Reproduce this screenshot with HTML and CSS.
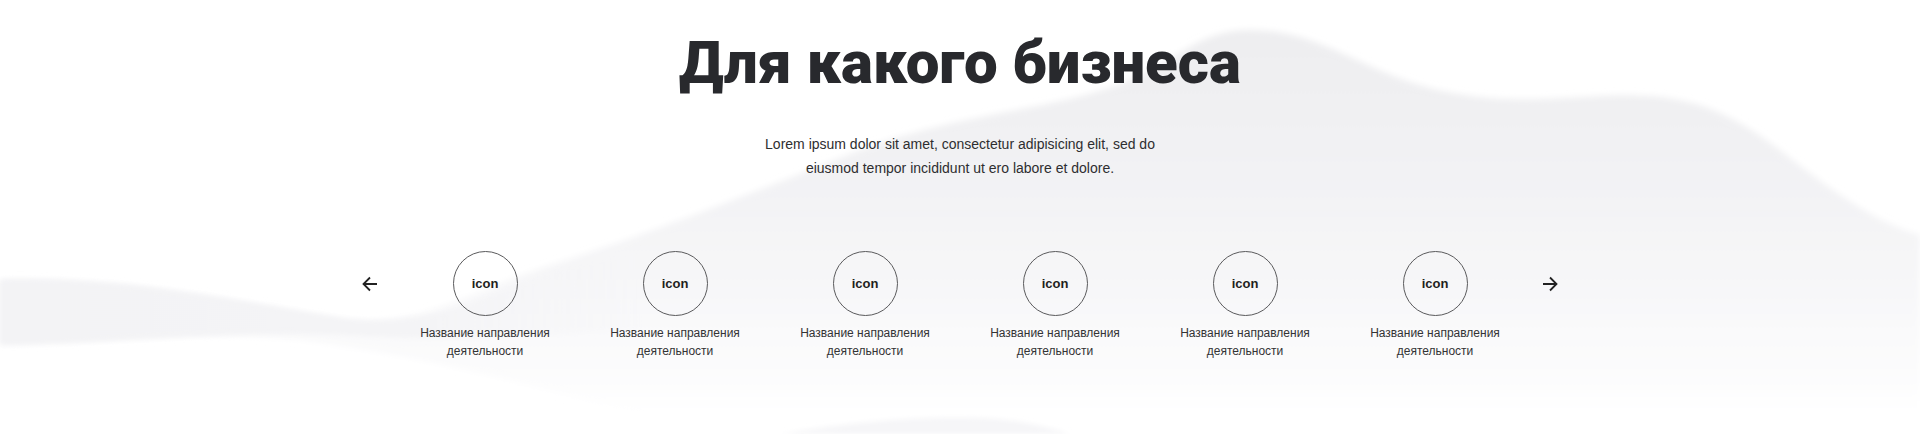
FILE: index.html
```html
<!DOCTYPE html>
<html lang="ru">
<head>
<meta charset="utf-8">
<title>Для какого бизнеса</title>
<link rel="stylesheet" href="styles.css">
</head>
<body>
<section class="business">
  <svg class="business__bg" viewBox="0 0 1920 434" preserveAspectRatio="none" aria-hidden="true">
    <defs>
      <linearGradient id="mountainFill" gradientUnits="userSpaceOnUse" x1="0" y1="30" x2="0" y2="420">
        <stop offset="0" stop-color="#eeeef0"/>
        <stop offset="0.45" stop-color="#f3f3f5"/>
        <stop offset="0.8" stop-color="#fafafb"/>
        <stop offset="1" stop-color="#ffffff"/>
      </linearGradient>
      <linearGradient id="ribbonFill" gradientUnits="userSpaceOnUse" x1="0" y1="0" x2="700" y2="0">
        <stop offset="0" stop-color="#f3f3f5"/>
        <stop offset="0.6" stop-color="#f4f4f6"/>
        <stop offset="1" stop-color="#f6f6f8" stop-opacity="0"/>
      </linearGradient>
      <filter id="soften" x="-5%" y="-10%" width="110%" height="120%">
        <feGaussianBlur stdDeviation="3"/>
      </filter>
      <filter id="softenLight" x="-5%" y="-20%" width="110%" height="140%">
        <feGaussianBlur stdDeviation="2.5"/>
      </filter>
    </defs>
    <path filter="url(#soften)" fill="url(#mountainFill)" d="M0,280 C120,276 230,300 340,318 C420,330 470,290 560,262 C650,234 760,190 860,150 C960,112 1060,110 1130,80 C1180,58 1200,30 1250,30 C1320,30 1360,70 1430,88 C1490,103 1530,100 1600,96 C1680,92 1720,105 1780,150 C1830,190 1880,225 1920,235 L1920,460 L760,460 C600,400 450,360 300,340 C200,330 100,345 0,345 Z"/>
    <path filter="url(#softenLight)" fill="url(#ribbonFill)" d="M0,280 C120,276 230,300 340,318 C420,330 480,300 560,268 L640,250 L640,330 C560,335 460,342 360,336 C240,328 110,344 0,345 Z"/>
    <path filter="url(#softenLight)" fill="#f6f6f8" d="M780,434 C840,424 900,416 980,418 C1020,419 1050,428 1070,434 Z"/>
  </svg>

  <div class="business__inner">
    <h2 class="business__title">Для какого бизнеса</h2>
    <p class="business__text">Lorem ipsum dolor sit amet, consectetur adipisicing elit, sed do eiusmod tempor incididunt ut ero labore et dolore.</p>

    <div class="carousel">
      <button class="carousel__arrow" type="button" aria-label="Назад">
        <svg viewBox="0 0 16 16" width="16" height="16"><path d="M15 8H1.5M8 1.5L1.5 8L8 14.5" fill="none" stroke="#222" stroke-width="1.8"/></svg>
      </button>
      <ul class="carousel__list">
        <li class="carousel__item"><div class="carousel__icon">icon</div><div class="carousel__label">Название направления деятельности</div></li>
        <li class="carousel__item"><div class="carousel__icon">icon</div><div class="carousel__label">Название направления деятельности</div></li>
        <li class="carousel__item"><div class="carousel__icon">icon</div><div class="carousel__label">Название направления деятельности</div></li>
        <li class="carousel__item"><div class="carousel__icon">icon</div><div class="carousel__label">Название направления деятельности</div></li>
        <li class="carousel__item"><div class="carousel__icon">icon</div><div class="carousel__label">Название направления деятельности</div></li>
        <li class="carousel__item"><div class="carousel__icon">icon</div><div class="carousel__label">Название направления деятельности</div></li>
      </ul>
      <button class="carousel__arrow" type="button" aria-label="Вперёд">
        <svg viewBox="0 0 16 16" width="16" height="16"><path d="M1 8H14.5M8 1.5L14.5 8L8 14.5" fill="none" stroke="#222" stroke-width="1.8"/></svg>
      </button>
    </div>
  </div>
</section>
</body>
</html>
```

FILE: styles.css
```css
* {
  box-sizing: border-box;
}

html, body {
  margin: 0;
  padding: 0;
  background: #ffffff;
}

body {
  font-family: "Liberation Sans", Arial, sans-serif;
  color: #2b2c30;
}

.business {
  position: relative;
  width: 100%;
  height: 434px;
  overflow: hidden;
  background: #ffffff;
}

.business__bg {
  position: absolute;
  left: 0;
  top: 0;
  width: 100%;
  height: 100%;
  z-index: 0;
}

.business__inner {
  position: relative;
  z-index: 1;
  display: flex;
  flex-direction: column;
  align-items: center;
  padding-top: 29px;
}

.business__title {
  margin: 0;
  font-family: Roboto, "Liberation Sans", sans-serif;
  font-weight: 900;
  font-size: 60px;
  line-height: 67px;
  color: #28292d;
  letter-spacing: 0;
}

.business__text {
  margin: 36px 0 0;
  width: 400px;
  text-align: center;
  font-size: 14px;
  line-height: 24px;
  color: #2e2e30;
}

.carousel {
  margin-top: 71px;
  display: flex;
  align-items: flex-start;
}

.carousel__arrow {
  width: 40px;
  height: 66px;
  padding: 0;
  border: 0;
  background: transparent;
  display: flex;
  align-items: center;
  justify-content: center;
  cursor: pointer;
}

.carousel__arrow svg {
  display: block;
}

.carousel__list {
  list-style: none;
  margin: 0;
  padding: 0;
  display: flex;
}

.carousel__item {
  width: 190px;
  display: flex;
  flex-direction: column;
  align-items: center;
}

.carousel__icon {
  width: 65px;
  height: 65px;
  border: 1px solid #5a5a5c;
  border-radius: 50%;
  display: flex;
  align-items: center;
  justify-content: center;
  font-weight: 700;
  font-size: 13px;
  color: #1f1f21;
}

.carousel__label {
  margin-top: 8px;
  width: 140px;
  text-align: center;
  font-size: 12px;
  line-height: 18px;
  color: #333335;
}
```
